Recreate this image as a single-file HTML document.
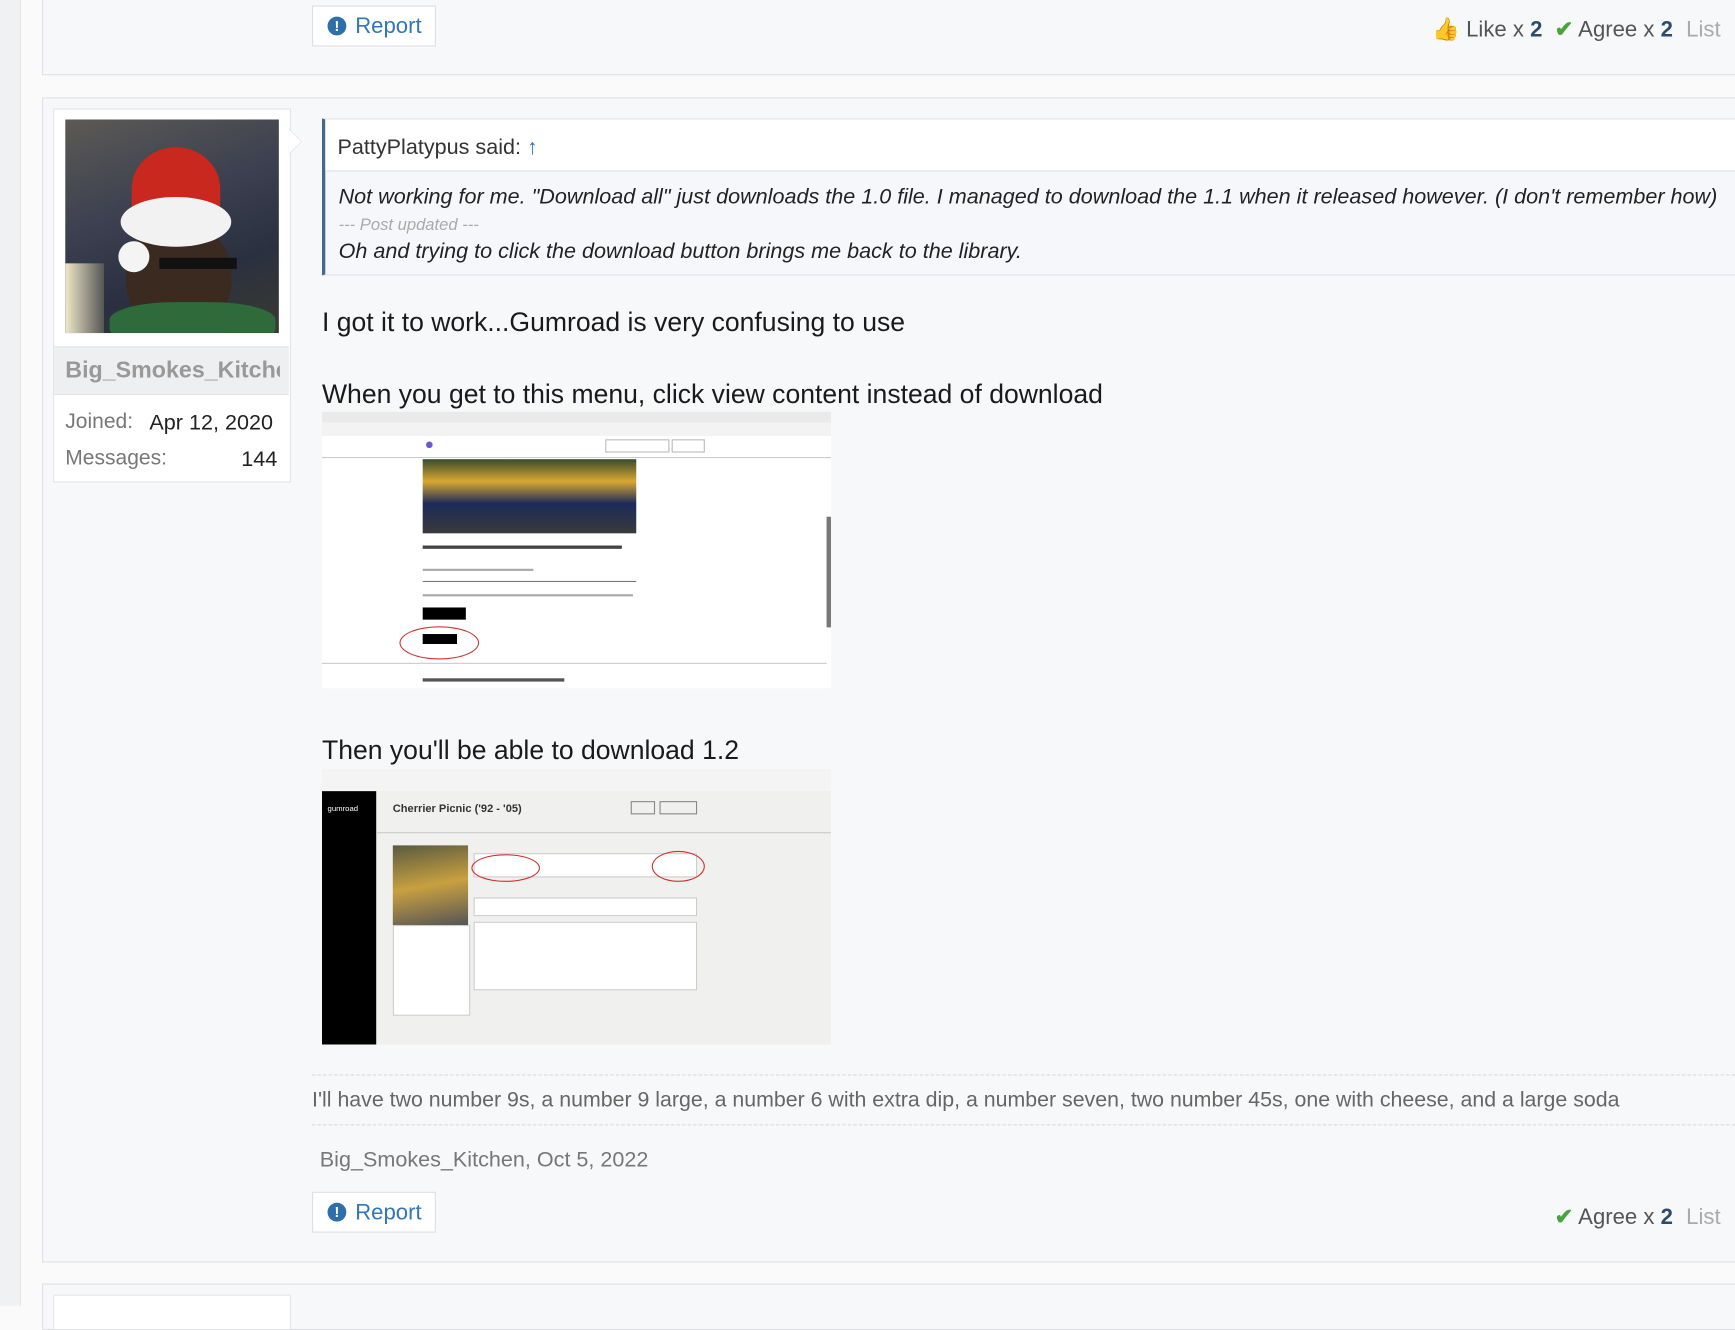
<!DOCTYPE html>
<html><head><meta charset="utf-8"><style>
html,body{margin:0;padding:0;width:1735px;height:1301px;overflow:hidden;background:#fafafa;}
#w{position:absolute;left:0;top:0;width:1568px;height:1180px;transform:scale(1.10651);transform-origin:0 0;font-family:"Liberation Sans",sans-serif;color:#141414;}
.a{position:absolute;}
.box{position:absolute;background:#f7f8f9;border:1px solid #dfe1e4;border-right:none;}
.btn{position:absolute;border:1px solid #dcdfe3;background:#fff;color:#2f77b8;font-size:20px;line-height:36px;padding:0 12px 0 38px;height:37px;box-sizing:border-box;}
.btn:before{content:"!";position:absolute;left:13px;top:9px;width:17px;height:17px;border-radius:50%;background:#2f6fa8;color:#fff;font-size:13px;font-weight:bold;line-height:17px;text-align:center;}
.re{position:absolute;font-size:20px;color:#555;white-space:nowrap;}
.re b{color:#2c4c6e;}
.re .l{color:#aaa;margin-left:12px;}
.chk{color:#4aa33c;font-weight:bold;}
.t{position:absolute;font-size:24px;white-space:nowrap;color:#1a1a1a;}
</style></head><body><div id="w">
<div class="a" style="left:0;top:0;width:18px;height:1180px;background:#f0f1f2;border-right:1px solid #e2e4e6"></div>
<div class="box" style="left:38px;top:-2px;width:1530px;height:68px;"></div>
<div class="btn" style="left:282px;top:5px">Report</div>
<div class="re" style="right:13px;top:14px"><span style="color:#e0a060">👍</span> Like x <b>2</b> &nbsp;<span class="chk">✔</span> Agree x <b>2</b><span class="l">List</span></div>

<div class="box" style="left:38px;top:88px;width:1530px;height:1051px;"></div>
<div class="a" style="left:48px;top:98px;width:213px;height:336px;background:#fff;border:1px solid #e2e4e6"></div>
<div class="a" style="left:261px;top:116px;width:0;height:0;border-top:12px solid transparent;border-bottom:12px solid transparent;border-left:12px solid #e4e6e8"></div>
<div class="a" style="left:261px;top:117px;width:0;height:0;border-top:11px solid transparent;border-bottom:11px solid transparent;border-left:11px solid #fff"></div>
<div class="a" style="left:59px;top:108px;width:193px;height:193px;background:linear-gradient(160deg,#5c5a55 0%,#3c4050 40%,#2a3040 70%,#3a3a30 100%);overflow:hidden">
 <div class="a" style="left:55px;top:95px;width:95px;height:95px;border-radius:45%;background:#3a2a20"></div>
 <div class="a" style="left:40px;top:165px;width:150px;height:40px;border-radius:40%;background:#2e6a3a"></div>
 <div class="a" style="left:60px;top:25px;width:80px;height:75px;border-radius:50% 50% 10% 10%;background:#c8281e"></div>
 <div class="a" style="left:50px;top:70px;width:100px;height:45px;border-radius:50%;background:#f2f2f2"></div>
 <div class="a" style="left:48px;top:110px;width:28px;height:28px;border-radius:50%;background:#f4f4f4"></div>
 <div class="a" style="left:85px;top:125px;width:70px;height:10px;background:#111"></div>
 <div class="a" style="left:0;top:130px;width:35px;height:63px;background:linear-gradient(90deg,#f0e8c8,#555)"></div>
</div>
<div class="a" style="left:49px;top:313px;width:212px;height:42px;background:#eeeff0;border-top:1px solid #e2e4e6;border-bottom:1px solid #e2e4e6"></div>
<div class="a" style="left:59px;top:323px;width:194px;overflow:hidden;white-space:nowrap;font-size:21px;font-weight:bold;color:#999">Big_Smokes_Kitchen</div>
<div class="a" style="left:59px;top:371px;font-size:19px;color:#777">Joined:</div>
<div class="a" style="left:135px;top:371px;font-size:19.5px;color:#222">Apr 12, 2020</div>
<div class="a" style="left:59px;top:404px;font-size:19px;color:#777">Messages:</div>
<div class="a" style="left:218px;top:404px;font-size:19.5px;color:#222">144</div>

<div class="a" style="left:291px;top:107px;width:1277px;height:142px;background:#f5f7fa;border-top:1px solid #e0e3e7;border-bottom:1px solid #e0e3e7;border-left:3px solid #47688a;box-sizing:border-box"></div>
<div class="a" style="left:294px;top:108px;width:1274px;height:46px;background:#fff;border-bottom:1px solid #e0e3e7"></div>
<div class="a" style="left:305px;top:122px;font-size:19.5px;color:#333">PattyPlatypus said: <span style="color:#2f77b8">↑</span></div>
<div class="a" style="left:306px;top:167px;font-size:19.5px;font-style:italic;color:#222;white-space:nowrap">Not working for me. "Download all" just downloads the 1.0 file. I managed to download the 1.1 when it released however. (I don't remember how)</div>
<div class="a" style="left:306px;top:195px;font-size:15px;font-style:italic;color:#aaa">--- Post updated ---</div>
<div class="a" style="left:306px;top:216px;font-size:19.5px;font-style:italic;color:#222">Oh and trying to click the download button brings me back to the library.</div>

<div class="t" style="left:291px;top:278px">I got it to work...Gumroad is very confusing to use</div>
<div class="t" style="left:291px;top:343px">When you get to this menu, click view content instead of download</div>

<div class="a" style="left:291px;top:372px;width:460px;height:250px;background:#fff;overflow:hidden">
 <div class="a" style="left:0;top:0;width:460px;height:10px;background:#eaeaea"></div>
 <div class="a" style="left:0;top:10px;width:460px;height:12px;background:#f3f3f3"></div>
 <div class="a" style="left:0;top:41px;width:460px;height:1px;background:#ccc"></div>
 <div class="a" style="left:94px;top:27px;width:6px;height:6px;border-radius:50%;background:#6a5ad0"></div>
 <div class="a" style="left:256px;top:25px;width:56px;height:10px;border:1px solid #bbb"></div>
 <div class="a" style="left:316px;top:25px;width:28px;height:10px;border:1px solid #bbb"></div>
 <div class="a" style="left:91px;top:43px;width:193px;height:67px;background:linear-gradient(180deg,#3a4a2e,#d8a830 30%,#1c2a5a 60%,#3a3a3a)"></div>
 <div class="a" style="left:91px;top:121px;width:180px;height:3px;background:#444"></div>
 <div class="a" style="left:91px;top:142px;width:100px;height:2px;background:#aaa"></div>
 <div class="a" style="left:91px;top:153px;width:193px;height:1px;background:#777"></div>
 <div class="a" style="left:91px;top:165px;width:190px;height:2px;background:#aaa"></div>
 <div class="a" style="left:91px;top:177px;width:39px;height:11px;background:#000"></div>
 <div class="a" style="left:91px;top:201px;width:31px;height:9px;background:#000"></div>
 <div class="a" style="left:70px;top:194px;width:70px;height:28px;border:1px solid #d03030;border-radius:50%"></div>
 <div class="a" style="left:456px;top:95px;width:4px;height:100px;background:#777"></div>
 <div class="a" style="left:0;top:227px;width:456px;height:1px;background:#ccc"></div>
 <div class="a" style="left:91px;top:241px;width:128px;height:3px;background:#555"></div>
</div>

<div class="t" style="left:291px;top:665px">Then you'll be able to download 1.2</div>
<div class="a" style="left:291px;top:695px;width:460px;height:249px;background:#f0f0ee;overflow:hidden">
 <div class="a" style="left:0;top:0;width:460px;height:20px;background:#f4f4f4"></div>
 <div class="a" style="left:0;top:20px;width:49px;height:229px;background:#000"></div>
 <div class="a" style="left:5px;top:33px;color:#fff;font-size:7px">gumroad</div>
 <div class="a" style="left:49px;top:57px;width:411px;height:1px;background:#ccc"></div>
 <div class="a" style="left:64px;top:31px;font-size:10px;color:#333;font-weight:bold">Cherrier Picnic ('92 - '05)</div>
 <div class="a" style="left:279px;top:29px;width:20px;height:10px;border:1px solid #888"></div>
 <div class="a" style="left:305px;top:29px;width:32px;height:10px;border:1px solid #888"></div>
 <div class="a" style="left:64px;top:69px;width:68px;height:72px;background:linear-gradient(170deg,#5a5a40,#c8a040 50%,#555)"></div>
 <div class="a" style="left:64px;top:141px;width:68px;height:80px;background:#fff;border:1px solid #ccc"></div>
 <div class="a" style="left:137px;top:76px;width:200px;height:20px;background:#fff;border:1px solid #ccc"></div>
 <div class="a" style="left:137px;top:116px;width:200px;height:15px;background:#fff;border:1px solid #ccc"></div>
 <div class="a" style="left:137px;top:138px;width:200px;height:60px;background:#fff;border:1px solid #ccc"></div>
 <div class="a" style="left:135px;top:77px;width:60px;height:23px;border:1px solid #d03030;border-radius:50%"></div>
 <div class="a" style="left:298px;top:74px;width:46px;height:26px;border:1px solid #d03030;border-radius:50%"></div>
</div>

<div class="a" style="left:282px;top:971px;width:1286px;border-top:1px dashed #d8dadd"></div>
<div class="a" style="left:282px;top:984px;font-size:19.3px;color:#666;white-space:nowrap">I'll have two number 9s, a number 9 large, a number 6 with extra dip, a number seven, two number 45s, one with cheese, and a large soda</div>
<div class="a" style="left:282px;top:1016px;width:1286px;border-top:1px dashed #d8dadd"></div>
<div class="a" style="left:289px;top:1037px;font-size:19.5px;color:#777">Big_Smokes_Kitchen, Oct 5, 2022</div>
<div class="btn" style="left:282px;top:1077px">Report</div>
<div class="re" style="right:13px;top:1087px"><span class="chk">✔</span> Agree x <b>2</b><span class="l">List</span></div>

<div class="box" style="left:38px;top:1160px;width:1530px;height:40px;"></div>
<div class="a" style="left:48px;top:1170px;width:213px;height:30px;background:#fff;border:1px solid #e2e4e6"></div>
</div></body></html>
